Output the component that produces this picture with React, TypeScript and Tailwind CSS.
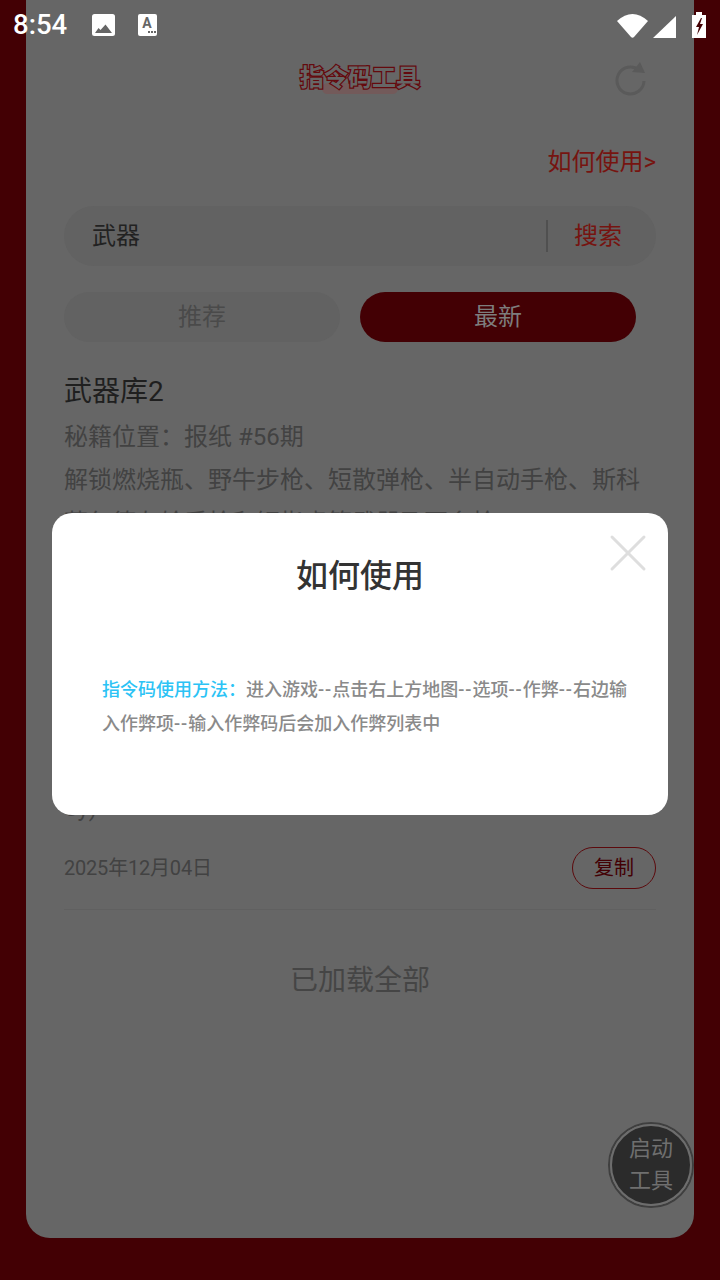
import { X } from "lucide-react";

const cjk = "font-['Roboto','Noto_Sans_CJK_SC',sans-serif]";

function Dash() {
  return <span className="tracking-[1px]">--</span>;
}

function StatusIcons() {
  return (
    <div className="flex items-center">
      <svg width="31" height="26" viewBox="0 0 31 26" className="mr-[5px]">
        <path d="M0 9 Q15.500 -5 31 9 L17 25 Q15.500 26.500 14 25 Z" fill="#fff" />
      </svg>
      <svg width="23" height="22" viewBox="0 0 23 22" className="mr-[16px] mt-[3px]">
        <path d="M0 22 L23 0 V22 Z" fill="#fff" />
      </svg>
      <svg width="14" height="26" viewBox="0 0 14 26">
        <path d="M4 0 H10 V3 H14 V26 H0 V3 H4 Z" fill="#fff" />
        <path d="M9 6 L4 15 H7 L5 23 L11 12 H8 L10 6 Z" fill="#430004" />
      </svg>
    </div>
  );
}

export default function App() {
  return (
    <div className={`relative w-[720px] h-[1280px] overflow-hidden bg-[#430004] ${cjk}`}>
      {/* dimmed page card */}
      <div className="mx-[26px] h-[1238px] rounded-b-[24px] bg-[#666666] px-[38px] flex flex-col">
        <div className="h-[65px] shrink-0" />
        <div className="relative h-[26px] flex justify-center shrink-0">
          <div className="absolute left-[258px] top-[18px] w-[76px] h-[11px] rounded-[6px] bg-[#735a5a]" />
          <span className="relative text-[24px] leading-[26px] font-bold text-[#666666] [-webkit-text-stroke:2.500px_#640a0e] [paint-order:stroke_fill]">
            指令码工具
          </span>
          <svg width="34" height="34" viewBox="0 0 34 34" className="absolute left-[550px] top-[-3px]">
            <path d="M25 8 A13.500 13.500 0 1 0 30 19" fill="none" stroke="#5a5a5a" strokeWidth="3" />
            <path d="M18 10 L26 0 L31 11 Z" fill="#5a5a5a" />
          </svg>
        </div>
        <div className="mt-[56px] h-[30px] flex justify-end items-center text-[24px] text-[#761410] leading-[30px] shrink-0">
          如何使用&gt;
        </div>
        <div className="mt-[29px] h-[60px] rounded-full bg-[#626262] flex items-center pl-[28px] shrink-0">
          <span className="flex-1 text-[24px] text-[#222222]">武器</span>
          <div className="w-[2px] h-[32px] bg-[#505050]" />
          <span className="w-[108px] pr-[8px] text-center text-[24px] text-[#761410]">搜索</span>
        </div>
        <div className="mt-[26px] flex gap-[20px] shrink-0">
          <div className="w-[276px] h-[50px] rounded-full bg-[#626262] flex items-center justify-center text-[24px] text-[#4a4a4a]">推荐</div>
          <div className="w-[276px] h-[50px] rounded-full bg-[#430004] flex items-center justify-center text-[24px] text-[#7d7d7d]">最新</div>
        </div>
        <div className="mt-[32px] text-[28px] leading-[36px] text-[#1f1f1f] shrink-0">武器库2</div>
        <div className="mt-[6px] text-[24px] leading-[43px] text-[#424242] shrink-0">
          <div>秘籍位置：报纸 #56期</div>
          <div>解锁燃烧瓶、野牛步枪、短散弹枪、半自动手枪、斯科</div>
          <div>菲尔德左轮手枪和铜指虎等武器及更多枪</div>
        </div>
        <div className="mt-[248px] h-[30px] text-[24px] leading-[30px] text-[#424242] shrink-0">5y)</div>
        <div className="mt-[24px] flex items-center justify-between shrink-0">
          <span className="text-[20px] tracking-[-0.2px] text-[#424242]">2025年12月04日</span>
          <div className="w-[84px] h-[42px] rounded-full border border-[#5c0a0d] flex items-center justify-center text-[20px] text-[#430004]">复制</div>
        </div>
        <div className="mt-[20px] h-px bg-[#606060] shrink-0" />
        <div className="mt-[51px] text-center text-[28px] leading-[40px] text-[#454545] shrink-0">已加载全部</div>
      </div>

      {/* status bar */}
      <div className="absolute left-0 top-0 w-full h-[50px] pl-[13px] pr-[14px] flex items-center text-white">
        <span className="text-[27.500px] font-medium font-['Roboto'] w-[79px]">8:54</span>
        <svg width="23" height="24" viewBox="0 0 23 24">
          <rect x="0" y="1" width="23" height="22" rx="2.500" fill="#fff" />
          <path d="M3 20 L6.500 15 L8.500 17 L13.500 11.500 L20 20 Z" fill="#666" />
        </svg>
        <svg width="19" height="22" viewBox="0 0 19 22" className="ml-[23px]">
          <rect x="0" y="0" width="19" height="22" rx="2" fill="#fff" />
          <text x="9" y="14" textAnchor="middle" fontSize="14" fontWeight="700" fill="#666" fontFamily="Roboto">A</text>
          <path d="M10 17 h2 v2 h-2 z M13 17 h2 v2 h-2 z M16 17 h2 v2 h-2 z" fill="#666" />
        </svg>
        <div className="ml-auto">
          <StatusIcons />
        </div>
      </div>

      {/* floating start button */}
      <div className="absolute left-[608px] top-[1122px] w-[86px] h-[86px] rounded-full border-2 border-[#3f3f3f]">
        <div className="h-full rounded-full bg-[#2b2b2b] border-2 border-[#6d6d6d] flex flex-col items-center justify-center text-[22px] leading-[32px] text-[#6f6f6f]">
          <span>启动</span>
          <span>工具</span>
        </div>
      </div>

      {/* how to use dialog */}
      <div className="absolute left-[52px] top-[513px] w-[616px] h-[302px] rounded-[20px] bg-white">
        <h2 className="mt-[42px] text-center text-[32px] leading-[42px] font-medium text-[#333333]">如何使用</h2>
        <X className="absolute right-[8px] top-[8px] text-[#dedede]" size={64} strokeWidth={1.100} />
        <p className="mt-[76px] pl-[50px] pr-[36px] text-[18px] leading-[34px] font-medium text-[#8a8a8a]">
          <span className="text-[#2cc3f5]">指令码使用方法：</span>进入游戏<Dash />点击右上方地图<Dash />选项<Dash />作弊<Dash />右边输入作弊项<Dash />输入作弊码后会加入作弊列表中
        </p>
      </div>
    </div>
  );
}
